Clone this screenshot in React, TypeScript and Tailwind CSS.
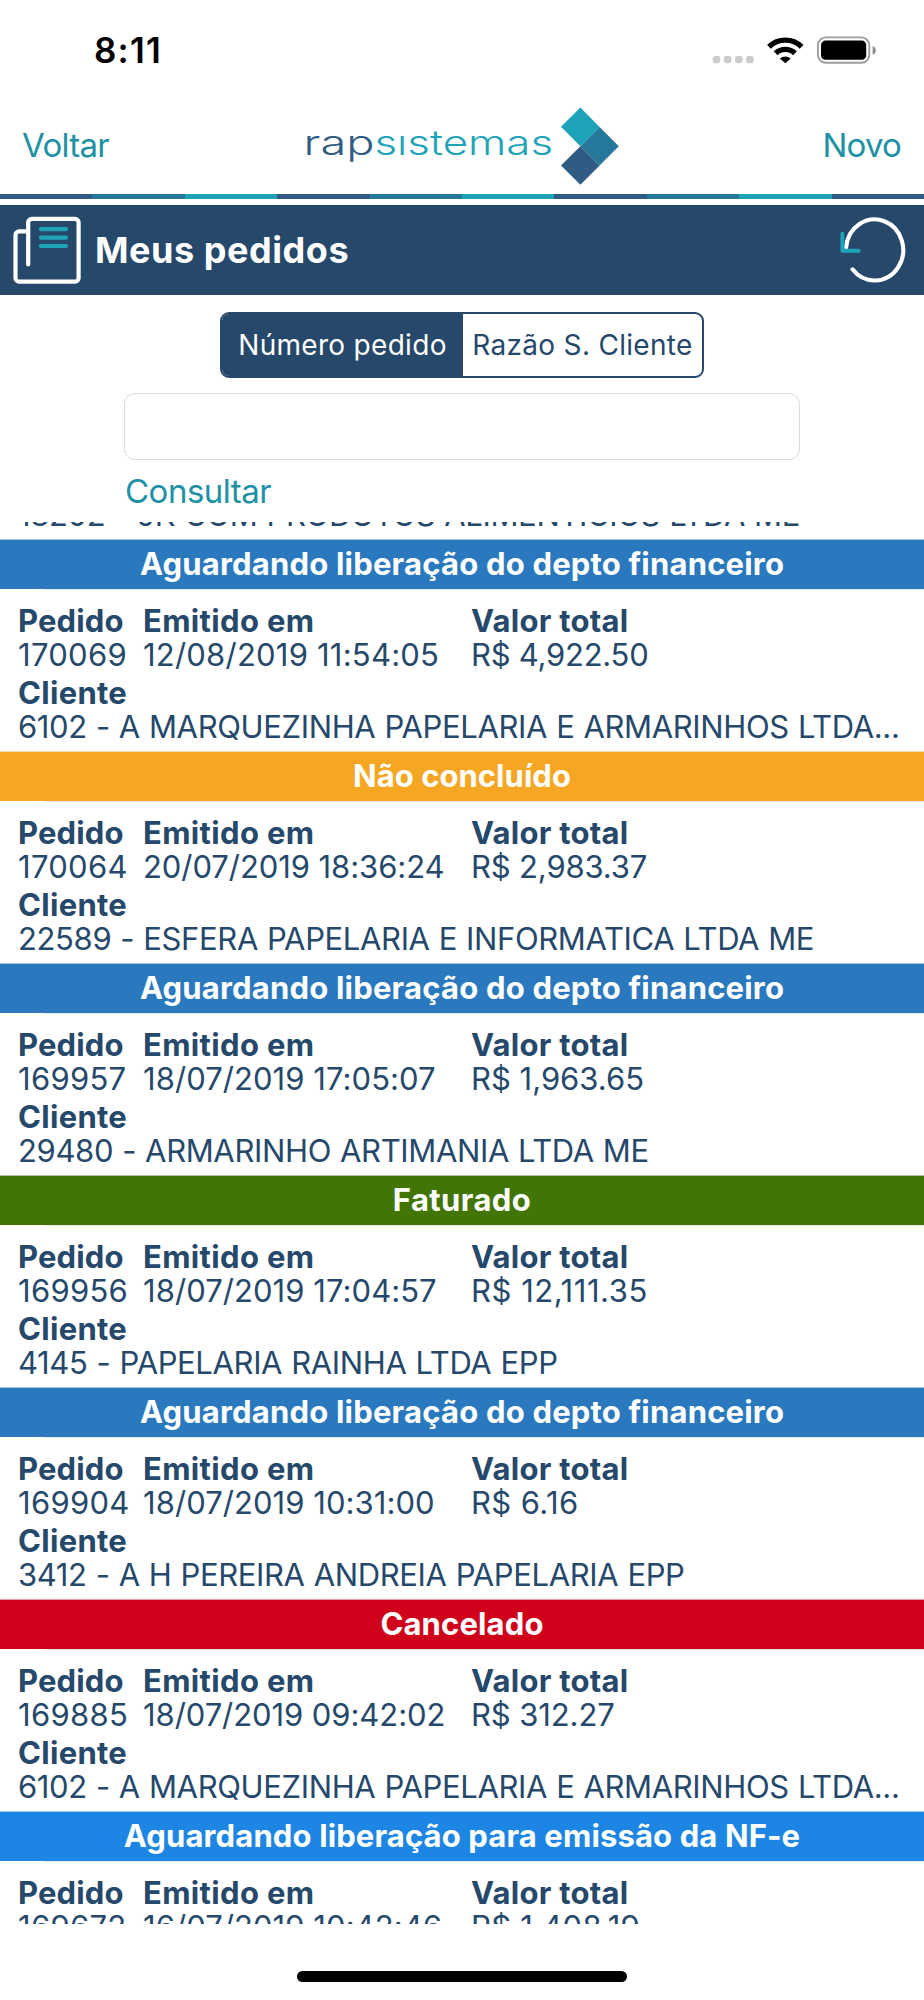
type Status = { label: string; band: string; tracking: string };

const FINANCE: Status = { label: "Aguardando liberação do depto financeiro", band: "bg-[#2a78be]", tracking: "tracking-[0.2px]" };
const OPEN: Status = { label: "Não concluído", band: "bg-[#f5a623]", tracking: "tracking-[0.05px]" };
const BILLED: Status = { label: "Faturado", band: "bg-[#417505]", tracking: "tracking-[0.4px]" };
const CANCELED: Status = { label: "Cancelado", band: "bg-[#d0021b]", tracking: "tracking-[0.15px]" };
const INVOICE: Status = { label: "Aguardando liberação para emissão da NF-e", band: "bg-[#1d86e5]", tracking: "tracking-[0.13px]" };

type Order = {
  id: string;
  date: string;
  dateTracking: string;
  total: string;
  totalTracking: string;
  client?: string;
  status: Status;
};

const ORDERS: Order[] = [
  { id: "170069", date: "12/08/2019 11:54:05", dateTracking: "tracking-[0.22px]", total: "R$ 4,922.50", totalTracking: "tracking-[-0.25px]", client: "6102 - A MARQUEZINHA PAPELARIA E ARMARINHOS LTDA...", status: FINANCE },
  { id: "170064", date: "20/07/2019 18:36:24", dateTracking: "tracking-[-0.07px]", total: "R$ 2,983.37", totalTracking: "tracking-[-0.15px]", client: "22589 - ESFERA PAPELARIA E INFORMATICA LTDA ME", status: OPEN },
  { id: "169957", date: "18/07/2019 17:05:07", dateTracking: "tracking-[0.06px]", total: "R$ 1,963.65", totalTracking: "tracking-normal", client: "29480 - ARMARINHO ARTIMANIA LTDA ME", status: FINANCE },
  { id: "169956", date: "18/07/2019 17:04:57", dateTracking: "tracking-[0.06px]", total: "R$ 12,111.35", totalTracking: "tracking-[0.55px]", client: "4145 - PAPELARIA RAINHA LTDA EPP", status: BILLED },
  { id: "169904", date: "18/07/2019 10:31:00", dateTracking: "tracking-[0.06px]", total: "R$ 6.16", totalTracking: "tracking-[0.4px]", client: "3412 - A H PEREIRA ANDREIA PAPELARIA EPP", status: FINANCE },
  { id: "169885", date: "18/07/2019 09:42:02", dateTracking: "tracking-[-0.07px]", total: "R$ 312.27", totalTracking: "tracking-[-0.1px]", client: "6102 - A MARQUEZINHA PAPELARIA E ARMARINHOS LTDA...", status: CANCELED },
  { id: "169672", date: "16/07/2019 10:42:46", dateTracking: "tracking-[0.06px]", total: "R$ 1,408.19", totalTracking: "tracking-[0.25px]", status: INVOICE },
];

const STRIPES = [
  "bg-[#305b83]", "bg-[#26799b]", "bg-[#1fa3b8]", "bg-[#305b83]", "bg-[#26799b]",
  "bg-[#1fa3b8]", "bg-[#305b83]", "bg-[#26799b]", "bg-[#1fa3b8]", "bg-[#305b83]",
];

function StatusBar() {
  return (
    <div className="flex h-[100px] shrink-0 items-center justify-between pr-[47px] pl-[94px]">
      <span className="text-[35px] leading-[42px] font-semibold tracking-[1.2px] text-black">8:11</span>
      <svg width="166" height="30" viewBox="711 35 166 30">
        {[712.7, 723.8, 735, 746.1].map((x) => (
          <rect key={x} x={x} y="56" width="7.6" height="7.2" rx="2.4" fill="#cbcbcb" />
        ))}
        <g fill="none" stroke="#000" strokeWidth="5.4">
          <path d="M769 46.8 A23.2 23.2 0 0 1 801.6 46.8" />
          <path d="M775.6 53.3 A14 14 0 0 1 795 53.3" />
        </g>
        <path d="M779.9 58.6 a7.8 7.8 0 0 1 10.8 0 L785.3 63.3z" fill="#000" />
        <rect x="817.9" y="37.4" width="51.4" height="25.4" rx="8" fill="none" stroke="#9d9d9d" strokeWidth="1.9" />
        <rect x="821" y="40.6" width="45.2" height="19.2" rx="4.4" fill="#000" />
        <path d="M872.6 46 q3.2 1.4 3.2 4.4 t-3.2 4.4z" fill="#8c8c8c" />
      </svg>
    </div>
  );
}

function Logo() {
  return (
    <svg width="316" height="80" viewBox="304 106 316 80" className="font-['Inter',sans-serif]">
      <text x="303.5" y="155" fontSize="34.5" textLength="71" lengthAdjust="spacingAndGlyphs" fill="#305b83" className="font-light">rap</text>
      <text x="374.5" y="155" fontSize="34.5" textLength="178.5" lengthAdjust="spacingAndGlyphs" fill="#1fa3b8" className="font-light">sıstemas</text>
      <path d="M580.4 107.6 L599.6 127 L580.4 146.2 L561 126.8z" fill="#1fa3b8" />
      <path d="M599.6 127 L618.8 146.3 L599.6 165.4 L580.4 146.2z" fill="#26799b" />
      <path d="M580.4 146.2 L599.6 165.4 L580.4 184.8 L561 165.6z" fill="#305b83" />
    </svg>
  );
}

function OrdersIcon() {
  return (
    <svg width="72" height="72" viewBox="11 214 72 72" fill="none" strokeWidth="4.2" strokeLinecap="round" strokeLinejoin="round">
      <path d="M28.2 264.5 V222.5 a3.6 3.6 0 0 1 3.6-3.6 H75 a3.6 3.6 0 0 1 3.6 3.6 V278 a3.6 3.6 0 0 1-3.6 3.6 H19.1 a3.6 3.6 0 0 1-3.6-3.6 V235 a3.6 3.6 0 0 1 3.6-3.6 H27" stroke="#fff" />
      <path d="M40.9 229.2 H66 M40.9 237.6 H66 M40.9 246 H66" stroke="#1fa3b8" />
    </svg>
  );
}

function ReloadIcon() {
  return (
    <svg width="70" height="72" viewBox="838 214 70 72" fill="none" strokeWidth="4.1" strokeLinecap="round">
      <path d="M846.1 247.5 A28.6 30.5 0 1 1 852.5 269.3" stroke="#fff" />
      <path d="M842.4 233.8 V250.7 H858.7" stroke="#1fa3b8" strokeWidth="3.9" strokeLinejoin="round" />
    </svg>
  );
}

function ClientName({ name }: { name: string }) {
  return (
    <div className="leading-[33px] tracking-[-0.36px] whitespace-nowrap [word-spacing:0.7px]">{name}</div>
  );
}

function OrderCard({ order }: { order: Order }) {
  const { status } = order;
  return (
    <article className="h-[212px]">
      <h2 className={`h-[50px] border-t border-white/60 text-center leading-[48px] font-bold text-white ${status.band} ${status.tracking}`}>
        {status.label}
      </h2>
      <div className="ml-[45px] h-px bg-[#e3e6ea]" />
      <div className="grid grid-cols-[125px_328px_1fr] pt-[14px] pl-[18px] whitespace-nowrap">
        <span className="font-bold tracking-[0.15px]">Pedido</span>
        <span className="font-bold tracking-[0.35px]">Emitido em</span>
        <span className="font-bold tracking-[0.25px]">Valor total</span>
        <span className="tracking-[0.3px]">{order.id}</span>
        <span className={order.dateTracking}>{order.date}</span>
        <span className={order.totalTracking}>{order.total}</span>
      </div>
      {order.client && (
        <div className="pt-1 pl-[18px]">
          <div className="font-bold tracking-[0.3px]">Cliente</div>
          <ClientName name={order.client} />
        </div>
      )}
    </article>
  );
}

export default function App() {
  return (
    <div className="flex h-[2000px] w-[924px] flex-col overflow-hidden bg-white font-['Inter',sans-serif]">
      <StatusBar />
      <header className="grid h-[94px] shrink-0 grid-cols-[1fr_316px_1fr] items-center pr-[23px] pb-[2px] pl-[22px] text-[33px] text-[#2091a5]">
        <span className="tracking-[-0.7px]">Voltar</span>
        <Logo />
        <span className="text-right tracking-[-0.8px]">Novo</span>
      </header>
      <div className="flex h-[5px] shrink-0">
        {STRIPES.map((c, i) => (
          <div key={i} className={`flex-1 ${c}`} />
        ))}
      </div>
      <div className="mt-[6px] flex h-[90px] shrink-0 items-center bg-[#25486b] pr-[16px] pl-[11px]">
        <OrdersIcon />
        <h1 className="ml-[12px] flex-1 text-[36px] leading-[54px] font-bold tracking-[0.55px] text-white">Meus pedidos</h1>
        <ReloadIcon />
      </div>
      <div className="mx-auto mt-[17px] flex h-[66px] w-[484px] shrink-0 overflow-hidden rounded-[9px] border-2 border-[#25486b] text-[28px] leading-[62px] tracking-[0.3px]">
        <div className="w-[241px] bg-[#25486b] text-center text-white">Número pedido</div>
        <div className="flex-1 text-center text-[#25486b]">Razão S. Cliente</div>
      </div>
      <div className="mx-auto mt-[15px] h-[67px] w-[676px] shrink-0 rounded-[11px] border border-[#dcdcdc]" />
      <div className="h-[62px] shrink-0 pl-[125px] text-[33px] leading-[63px] tracking-[-0.5px] text-[#2091a5]">Consultar</div>
      <main className="h-[1402px] shrink-0 overflow-hidden text-[31px] leading-[34px] text-[#25486b]">
        <div className="flex h-[17px] flex-col justify-end overflow-hidden pb-[8px] pl-[18px]">
          <ClientName name="18202 - JK COM PRODUTOS ALIMENTICIOS LTDA ME" />
        </div>
        {ORDERS.map((o) => (
          <OrderCard key={o.id} order={o} />
        ))}
      </main>
      <div className="mx-auto mt-[47px] h-[11px] w-[330px] shrink-0 rounded-full bg-black" />
    </div>
  );
}
